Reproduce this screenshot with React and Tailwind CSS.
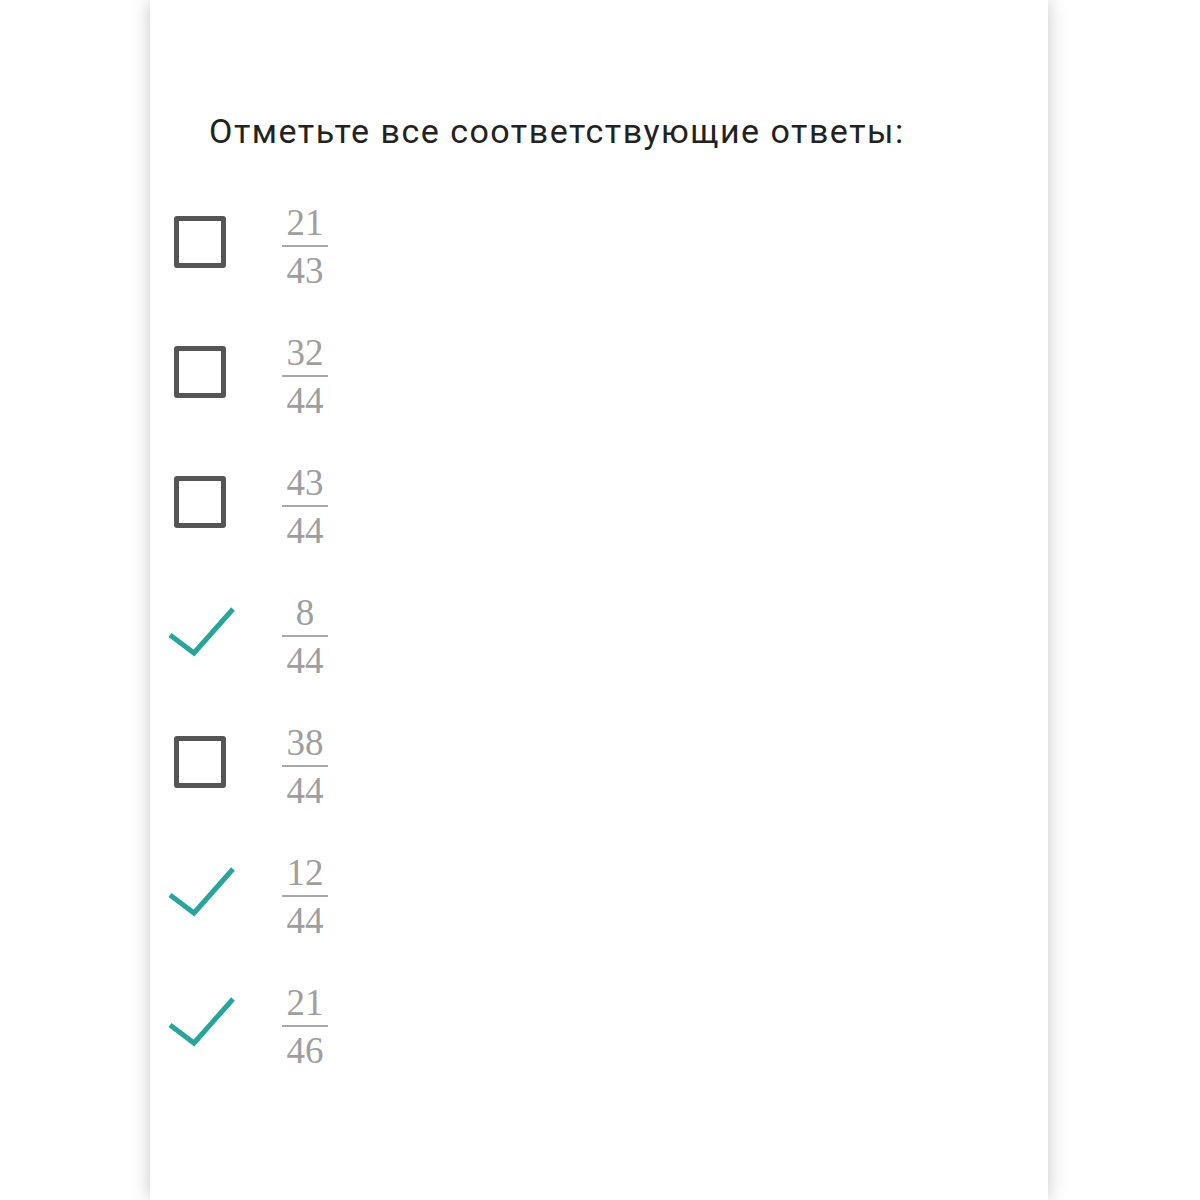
import React from "react"

const answers = [
  { n: "21", d: "43", checked: false },
  { n: "32", d: "44", checked: false },
  { n: "43", d: "44", checked: false },
  { n: "8", d: "44", checked: true },
  { n: "38", d: "44", checked: false },
  { n: "12", d: "44", checked: true },
  { n: "21", d: "46", checked: true },
]

function Check() {
  return (
    <svg width="68" height="56" viewBox="0 0 68 56" fill="none">
      <path d="M2 31 L26 49 L65 5" stroke="#26a69a" strokeWidth="5" strokeLinejoin="miter" />
    </svg>
  )
}

function Fraction({ n, d }) {
  return (
    <div className="flex flex-col items-center text-[#9e9e9e] leading-none mt-[10px]" style={{ fontFamily: '"Liberation Serif", "DejaVu Serif", serif' }}>
      <span className="text-[37px] pb-[4px]">{n}</span>
      <span className="w-[46px] h-[2px] bg-[#a8a8a8]"></span>
      <span className="text-[37px] pt-[5px]">{d}</span>
    </div>
  )
}

export default function App() {
  return (
    <div className="min-h-[1200px] bg-white flex justify-center">
      <div className="w-[898px] ml-[-2px] min-h-[1200px] bg-white shadow-[0_0_18px_rgba(0,0,0,0.22)]">
        <div className="pt-[106px] pl-[59px]">
          <h1 className="text-[34px] text-[#222] tracking-[1.5px]" style={{ fontFamily: 'Roboto, "Noto Sans", sans-serif' }}>
            Отметьте все соответствующие ответы:
          </h1>
        </div>
        <div className="mt-[40px] flex flex-col gap-[41px]">
          {answers.map((a, i) => (
            <div key={i} className="flex items-center h-[89px]">
              <div className="w-[132px] flex justify-start pl-[18px]">
                {a.checked ? (
                  <div className="w-[68px] h-[52px] flex items-center"><Check /></div>
                ) : (
                  <div className="w-[52px] h-[52px] ml-[6px] border-[5px] border-[#555] rounded-[3px]"></div>
                )}
              </div>
              <Fraction n={a.n} d={a.d} />
            </div>
          ))}
        </div>
      </div>
    </div>
  )
}
